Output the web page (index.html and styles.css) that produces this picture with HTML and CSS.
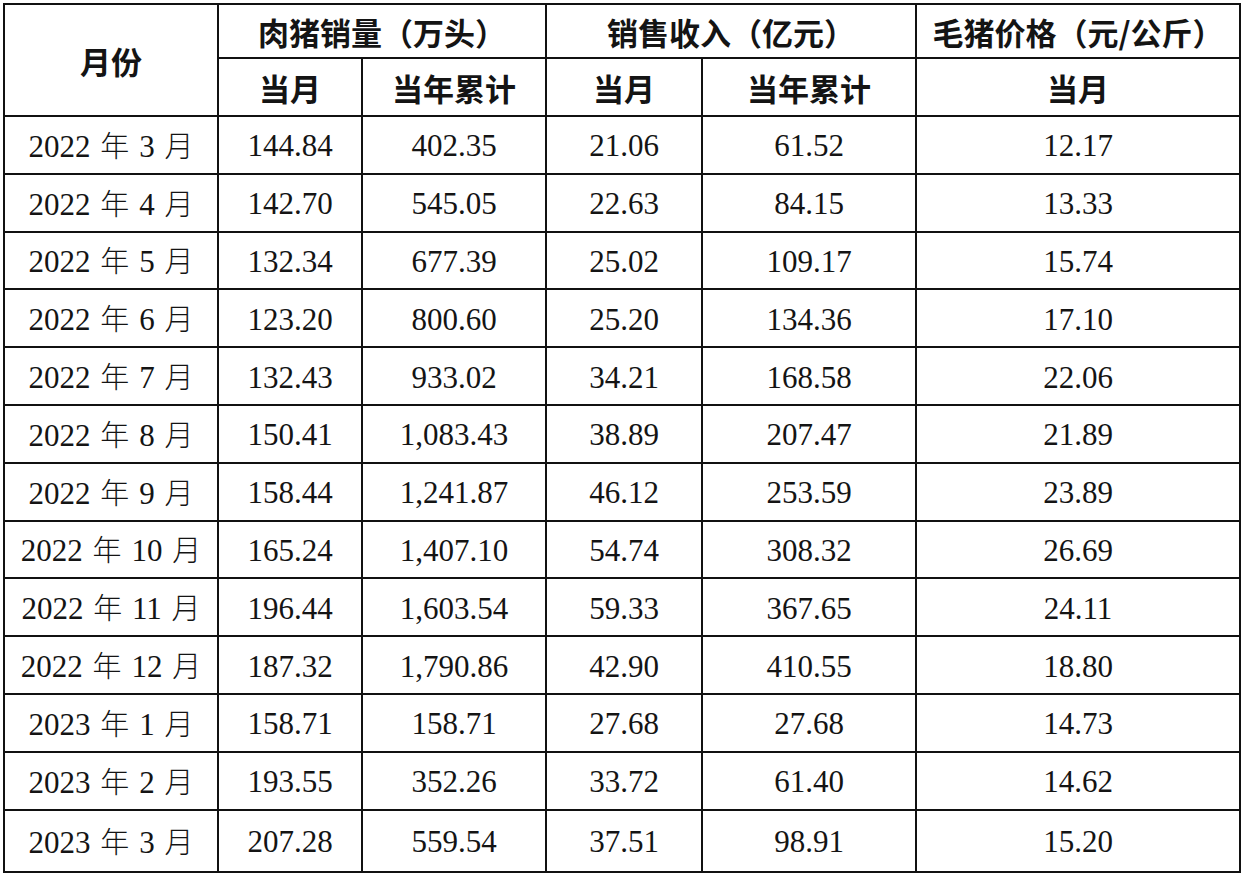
FILE: index.html
```html
<!DOCTYPE html>
<html lang="zh">
<head>
<meta charset="utf-8">
<link rel="stylesheet" href="styles.css">
</head>
<body>
<table class="data">
  <colgroup>
    <col class="c1"><col class="c2"><col class="c3"><col class="c4"><col class="c5"><col class="c6">
  </colgroup>
  <thead>
    <tr class="h1">
      <th rowspan="2">月份</th>
      <th colspan="2">肉猪销量（万头）</th>
      <th colspan="2">销售收入（亿元）</th>
      <th>毛猪价格（元/公斤）</th>
    </tr>
    <tr class="h2">
      <th>当月</th><th>当年累计</th><th>当月</th><th>当年累计</th><th>当月</th>
    </tr>
  </thead>
  <tbody>
    <tr><td class="m">2022 <span class="cj">年</span> 3 <span class="cj">月</span></td><td>144.84</td><td>402.35</td><td>21.06</td><td>61.52</td><td>12.17</td></tr>
    <tr><td class="m">2022 <span class="cj">年</span> 4 <span class="cj">月</span></td><td>142.70</td><td>545.05</td><td>22.63</td><td>84.15</td><td>13.33</td></tr>
    <tr><td class="m">2022 <span class="cj">年</span> 5 <span class="cj">月</span></td><td>132.34</td><td>677.39</td><td>25.02</td><td>109.17</td><td>15.74</td></tr>
    <tr><td class="m">2022 <span class="cj">年</span> 6 <span class="cj">月</span></td><td>123.20</td><td>800.60</td><td>25.20</td><td>134.36</td><td>17.10</td></tr>
    <tr><td class="m">2022 <span class="cj">年</span> 7 <span class="cj">月</span></td><td>132.43</td><td>933.02</td><td>34.21</td><td>168.58</td><td>22.06</td></tr>
    <tr><td class="m">2022 <span class="cj">年</span> 8 <span class="cj">月</span></td><td>150.41</td><td>1,083.43</td><td>38.89</td><td>207.47</td><td>21.89</td></tr>
    <tr><td class="m">2022 <span class="cj">年</span> 9 <span class="cj">月</span></td><td>158.44</td><td>1,241.87</td><td>46.12</td><td>253.59</td><td>23.89</td></tr>
    <tr><td class="m">2022 <span class="cj">年</span> 10 <span class="cj">月</span></td><td>165.24</td><td>1,407.10</td><td>54.74</td><td>308.32</td><td>26.69</td></tr>
    <tr><td class="m">2022 <span class="cj">年</span> 11 <span class="cj">月</span></td><td>196.44</td><td>1,603.54</td><td>59.33</td><td>367.65</td><td>24.11</td></tr>
    <tr><td class="m">2022 <span class="cj">年</span> 12 <span class="cj">月</span></td><td>187.32</td><td>1,790.86</td><td>42.90</td><td>410.55</td><td>18.80</td></tr>
    <tr><td class="m">2023 <span class="cj">年</span> 1 <span class="cj">月</span></td><td>158.71</td><td>158.71</td><td>27.68</td><td>27.68</td><td>14.73</td></tr>
    <tr><td class="m">2023 <span class="cj">年</span> 2 <span class="cj">月</span></td><td>193.55</td><td>352.26</td><td>33.72</td><td>61.40</td><td>14.62</td></tr>
    <tr class="last"><td class="m">2023 <span class="cj">年</span> 3 <span class="cj">月</span></td><td>207.28</td><td>559.54</td><td>37.51</td><td>98.91</td><td>15.20</td></tr>
  </tbody>
</table>
</body>
</html>
```

FILE: styles.css
```css
html, body {
  margin: 0;
  padding: 0;
  background: #ffffff;
}
body {
  padding: 3px 0 0 3px;
}
.data {
  border-collapse: collapse;
  table-layout: fixed;
  width: 1238px;
  color: #141414;
}
.c1 { width: 214px; }
.c2 { width: 144px; }
.c3 { width: 184px; }
.c4 { width: 156px; }
.c5 { width: 214px; }
.c6 { width: 324px; }
.data th,
.data td {
  border: 2px solid #111;
  padding: 0;
  text-align: center;
  vertical-align: middle;
  overflow: hidden;
  white-space: nowrap;
}
.data th {
  font-family: "Noto Sans CJK SC", sans-serif;
  font-weight: 700;
  font-size: 31px;
  line-height: 1;
  letter-spacing: 0;
}
.h1 th { height: 52px; }
.h2 th { height: 56px; }
.data td {
  font-family: "Liberation Serif", "Noto Sans CJK SC", serif;
  font-size: 31px;
  height: 53.8px;
  line-height: 1;
  padding-top: 2px;
}
.data td.m { word-spacing: 2px; }
.data tr.last td { height: 58px; }
.cj {
  font-family: "Noto Sans CJK SC", sans-serif;
  font-weight: 300;
  font-size: 29px;
}
```
